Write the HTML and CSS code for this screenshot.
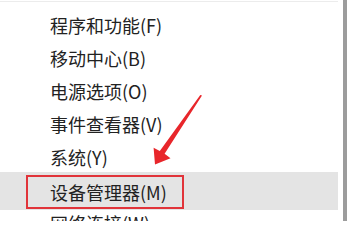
FILE: index.html
```html
<!DOCTYPE html>
<html lang="zh-CN">
<head>
<meta charset="utf-8">
<title>Win+X 菜单</title>
<link rel="stylesheet" href="styles.css">
</head>
<body>
<div class="screen">
  <div class="menu">
    <div class="sep"></div>
    <ul class="items">
      <li class="item"><span class="label">程序和功能(F)</span></li>
      <li class="item"><span class="label">移动中心(B)</span></li>
      <li class="item"><span class="label">电源选项(O)</span></li>
      <li class="item"><span class="label">事件查看器(V)</span></li>
      <li class="item"><span class="label">系统(Y)</span></li>
      <li class="item item-hover"><span class="label boxed">设备管理器(M)</span></li>
      <li class="item"><span class="label">网络连接(W)</span></li>
    </ul>
  </div>
  <div class="gap"></div>
  <div class="edge"></div>
  <svg class="arrow" width="347" height="221" viewBox="0 0 347 221" aria-hidden="true">
    <polygon points="200.3,95 202,95.6 164.6,153.8 170.5,158.2 155,164.5 153.6,147.8 159.8,150.9" fill="#e8262b"/>
  </svg>
</div>
</body>
</html>
```
FILE: styles.css
```css
html, body {
  margin: 0;
  padding: 0;
  background: #ffffff;
}

.screen {
  position: relative;
  display: flex;
  width: 347px;
  height: 221px;
  overflow: hidden;
  font-family: "Noto Sans CJK SC", "Noto Sans", "Liberation Sans", sans-serif;
}

.menu {
  width: 338px;
  flex: none;
}

.sep {
  margin-top: 1px;
  height: 1px;
  background: #ececec;
}

.items {
  list-style: none;
  margin: 0;
  padding: 7px 0 0 0;
}

.item {
  height: 33px;
  line-height: 33px;
  padding-left: 50px;
  font-size: 18px;
  color: #222222;
  white-space: nowrap;
}

.item-hover {
  background: #e4e4e4;
  box-shadow: 0 -2px 0 #e4e4e4, 0 3px 0 #e4e4e4;
  position: relative;
}

.label {
  display: inline-block;
  vertical-align: top;
}

.boxed {
  box-sizing: border-box;
  width: 158px;
  height: 34px;
  line-height: 30px;
  margin-left: -24px;
  margin-top: 1px;
  padding-left: 22px;
  border: 2px solid #e1343a;
}

.gap {
  width: 5px;
  flex: none;
}

.edge {
  width: 4px;
  flex: none;
  background: #9c9c9c;
}

.arrow {
  position: absolute;
  left: 0;
  top: 0;
}
```
